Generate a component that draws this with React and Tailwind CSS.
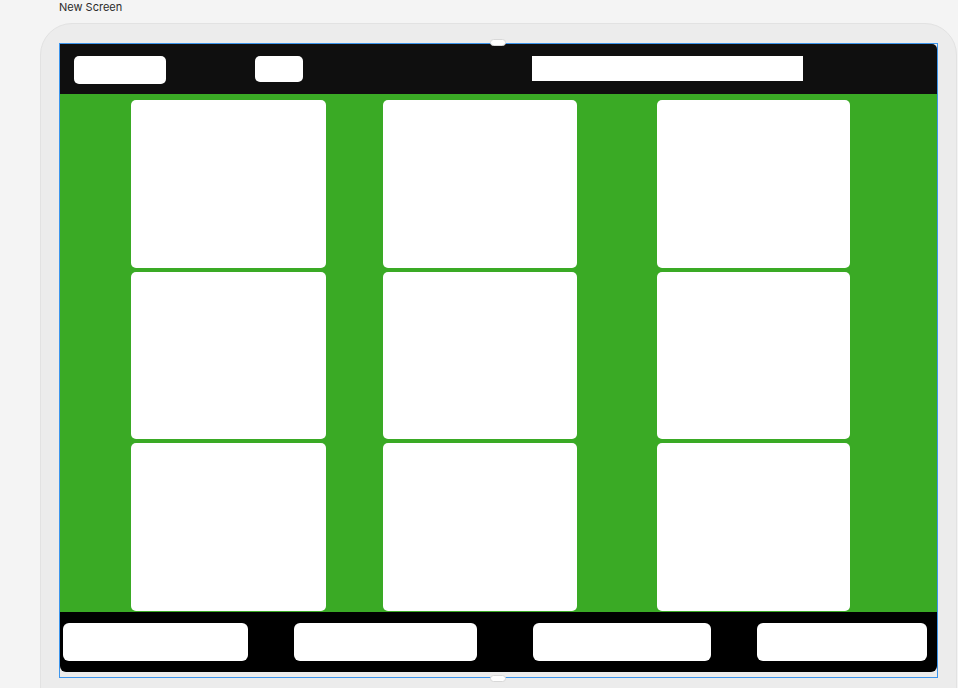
import React from 'react'

const columns = [
  { w: 'w-[195px]', ml: 'ml-[71px]' },
  { w: 'w-[194px]', ml: 'ml-[57px]' },
  { w: 'w-[193px]', ml: 'ml-[80px]' },
]

function Card({ h }) {
  return <div className={`bg-white rounded-[5px] ${h}`} />
}

function Header() {
  return (
    <div className="h-[50px] bg-[#0f0f0f] rounded-tr-[5px] flex items-start pt-3 pl-[14px]">
      <div className="w-[92px] h-[28px] bg-white rounded-[5px]" />
      <div className="ml-[89px] w-[48px] h-[26px] bg-white rounded-[5px]" />
      <div className="ml-[229px] w-[271px] h-[25px] bg-white" />
    </div>
  )
}

function Footer() {
  return (
    <div className="h-[60px] bg-black rounded-b-[6px] flex items-start pt-[11px] pl-[3px]">
      <div className="w-[185px] h-[38px] bg-white rounded-[6px]" />
      <div className="ml-[46px] w-[183px] h-[38px] bg-white rounded-[6px]" />
      <div className="ml-[56px] w-[178px] h-[38px] bg-white rounded-[6px]" />
      <div className="ml-[46px] w-[170px] h-[38px] bg-white rounded-[6px]" />
    </div>
  )
}

export default function App() {
  return (
    <div className="w-[958px] h-[688px] overflow-hidden bg-[#f4f4f4] font-['Inter','Liberation_Sans',sans-serif]">
      <div className="pl-[59px] pt-[1px] h-[23px] text-[11px] text-[#2b2b2b] leading-[13px]">New Screen</div>
      <div className="ml-[40px] w-[917px] h-[720px] rounded-[32px] bg-[#ececec] border border-[#e2e2e2] pt-[19px] pl-[18px]">
        {/* selection frame */}
        <div className="relative w-[879px] h-[635px] bg-[#3d95ec] p-px">
          <div className="w-full h-full bg-[#ececec]">
            <Header />
            <div className="h-[518px] bg-[#3aaa25] flex pt-[6px]">
              {columns.map((c, i) => (
                <div key={i} className={`flex flex-col gap-1 ${c.w} ${c.ml}`}>
                  <Card h="h-[168px]" />
                  <Card h="h-[167px]" />
                  <Card h="h-[168px]" />
                </div>
              ))}
            </div>
            <Footer />
          </div>
          <div className="absolute -top-[4px] left-[431px] w-[16px] h-[7px] bg-white rounded-full border border-[#d8d8d8]" />
          <div className="absolute -bottom-[4px] left-[431px] w-[16px] h-[7px] bg-white rounded-full border border-[#d8d8d8]" />
        </div>
      </div>
    </div>
  )
}
